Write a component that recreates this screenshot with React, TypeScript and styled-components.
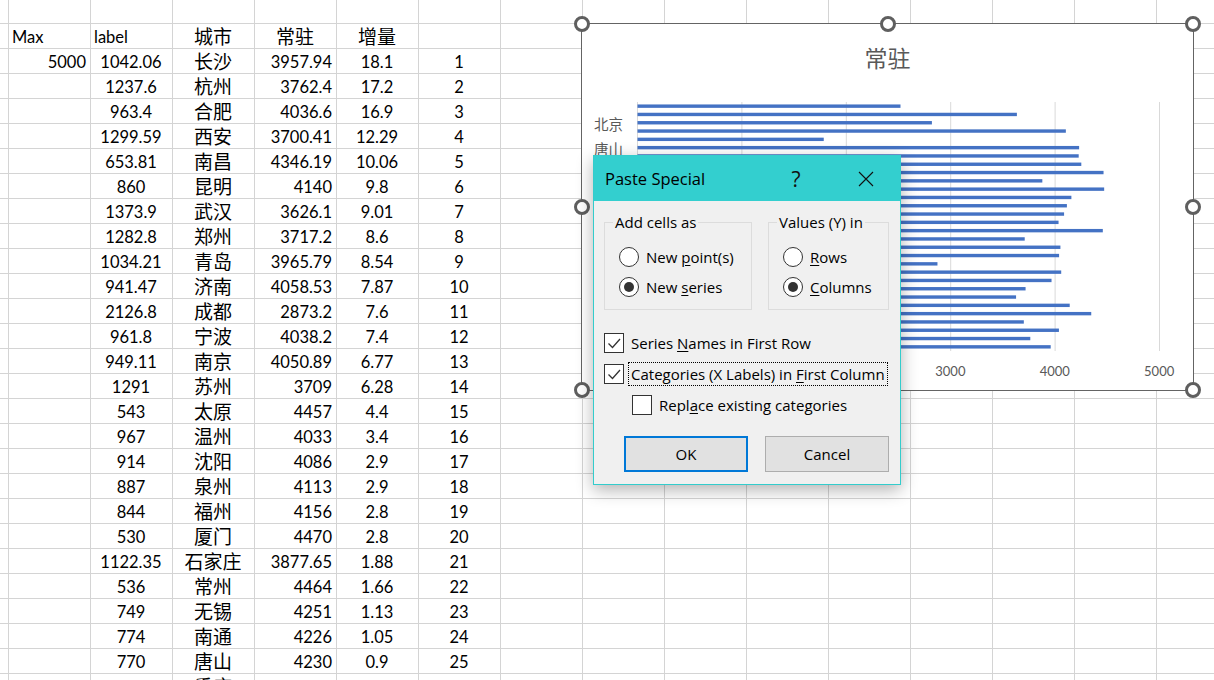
import React from 'react';
import styled, { createGlobalStyle } from 'styled-components';

type Align = 'left' | 'center' | 'right';

interface CityRow {
  label: number;
  city: string;
  resident: number;
  growth: number;
}

// label + resident = 5000 (the Max column)
const rows: CityRow[] = [
  { label: 1042.06, city: '长沙', resident: 3957.94, growth: 18.1 },
  { label: 1237.6, city: '杭州', resident: 3762.4, growth: 17.2 },
  { label: 963.4, city: '合肥', resident: 4036.6, growth: 16.9 },
  { label: 1299.59, city: '西安', resident: 3700.41, growth: 12.29 },
  { label: 653.81, city: '南昌', resident: 4346.19, growth: 10.06 },
  { label: 860, city: '昆明', resident: 4140, growth: 9.8 },
  { label: 1373.9, city: '武汉', resident: 3626.1, growth: 9.01 },
  { label: 1282.8, city: '郑州', resident: 3717.2, growth: 8.6 },
  { label: 1034.21, city: '青岛', resident: 3965.79, growth: 8.54 },
  { label: 941.47, city: '济南', resident: 4058.53, growth: 7.87 },
  { label: 2126.8, city: '成都', resident: 2873.2, growth: 7.6 },
  { label: 961.8, city: '宁波', resident: 4038.2, growth: 7.4 },
  { label: 949.11, city: '南京', resident: 4050.89, growth: 6.77 },
  { label: 1291, city: '苏州', resident: 3709, growth: 6.28 },
  { label: 543, city: '太原', resident: 4457, growth: 4.4 },
  { label: 967, city: '温州', resident: 4033, growth: 3.4 },
  { label: 914, city: '沈阳', resident: 4086, growth: 2.9 },
  { label: 887, city: '泉州', resident: 4113, growth: 2.9 },
  { label: 844, city: '福州', resident: 4156, growth: 2.8 },
  { label: 530, city: '厦门', resident: 4470, growth: 2.8 },
  { label: 1122.35, city: '石家庄', resident: 3877.65, growth: 1.88 },
  { label: 536, city: '常州', resident: 4464, growth: 1.66 },
  { label: 749, city: '无锡', resident: 4251, growth: 1.13 },
  { label: 774, city: '南通', resident: 4226, growth: 1.05 },
  { label: 770, city: '唐山', resident: 4230, growth: 0.9 },
  { label: 3216, city: '重庆', resident: 1784, growth: 0.8 },
  { label: 897, city: '天津', resident: 4103, growth: 0.7 },
  { label: 2180, city: '北京', resident: 2820, growth: 0.6 },
  { label: 1366, city: '广州', resident: 3634, growth: 0.5 },
  { label: 2481, city: '深圳', resident: 2519, growth: 0.4 },
];

const VISIBLE_ROWS = 26;
const EXTRA_COLS = 9;
const PX_PER_UNIT = 104.4 / 1000;
const BAND = 8.3;

const GlobalStyle = createGlobalStyle`
  html, body {
    margin: 0;
    padding: 0;
    background: #fff;
  }
  body {
    overflow: hidden;
  }
`;

const Page = styled.div`
  position: relative;
  width: 1214px;
  height: 680px;
  overflow: hidden;
  background: #fff;
`;

const Sheet = styled.div`
  display: grid;
  grid-template-columns: 9px repeat(15, 82px);
  grid-template-rows: 24px;
  grid-auto-rows: 25px;
  font-family: Lato, 'Noto Sans CJK SC', sans-serif;
  color: #000;
`;

const Cell = styled.div<{ $align?: Align; $cjk?: boolean }>`
  box-sizing: border-box;
  border-right: 1px solid #d4d4d4;
  border-bottom: 1px solid #d4d4d4;
  display: flex;
  align-items: flex-end;
  justify-content: ${(p) =>
    p.$align === 'right' ? 'flex-end' : p.$align === 'center' ? 'center' : 'flex-start'};
  padding: 0 4px 1px 3px;
  font-size: ${(p) => (p.$cjk ? '19px' : '16.5px')};
  line-height: 20px;
  white-space: nowrap;
`;

/* chart object */
const ChartFrame = styled.div`
  position: absolute;
  left: 581px;
  top: 23px;
  width: 613px;
  height: 368px;
  box-sizing: border-box;
  border: 1px solid #646464;
  background: #fff;
  display: flex;
  flex-direction: column;
  font-family: Lato, 'Noto Sans CJK SC', sans-serif;
  color: #595959;
`;

const ChartTitle = styled.div`
  height: 78px;
  box-sizing: border-box;
  padding-top: 20px;
  text-align: center;
  font-size: 23px;
  line-height: 28px;
`;

const PlotRow = styled.div`
  display: flex;
  height: 249px;
`;

const CategoryAxis = styled.div`
  width: 55px;
  box-sizing: border-box;
  padding: 11px 14px 0 0;
  display: flex;
  flex-direction: column;
  align-items: flex-end;
  overflow: hidden;
`;

const CategoryLabel = styled.span`
  height: 24.9px;
  line-height: 24.9px;
  font-size: 14.5px;
  flex-shrink: 0;
`;

const ValueAxis = styled.div`
  display: flex;
  margin-top: 12px;
  padding-left: 3px;
`;

const Tick = styled.span`
  width: 104.4px;
  flex-shrink: 0;
  text-align: center;
  font-size: 13px;
  line-height: 16px;
`;

const Handle = styled.span<{ $x: number; $y: number }>`
  position: absolute;
  left: ${(p) => p.$x}%;
  top: ${(p) => p.$y}%;
  width: 16px;
  height: 16px;
  margin: -8px 0 0 -8px;
  box-sizing: border-box;
  border: 3px solid #5f5f5f;
  border-radius: 50%;
  background: #fff;
`;

/* paste special dialog */
const Dialog = styled.div`
  position: absolute;
  left: 593px;
  top: 155px;
  width: 308px;
  height: 330px;
  box-sizing: border-box;
  border: 1px solid #33cccc;
  background: #f0f0f0;
  box-shadow: 0 5px 16px rgba(0, 0, 0, 0.3);
  display: flex;
  flex-direction: column;
  font-family: 'Open Sans', sans-serif;
  font-size: 15px;
  color: #000;
`;

const TitleBar = styled.div`
  height: 45px;
  flex-shrink: 0;
  background: #33cfcf;
  display: flex;
  align-items: center;
  padding-left: 11px;
`;

const TitleText = styled.span`
  flex: 1;
  font-size: 16.5px;
`;

const TitleButton = styled.span<{ $gap: number }>`
  width: 46px;
  display: flex;
  justify-content: center;
  align-items: center;
  margin-right: ${(p) => p.$gap}px;
  font-size: 21px;
  color: #111;
`;

const Body = styled.div`
  flex: 1;
  display: flex;
  flex-direction: column;
  padding: 11px 11px 12px 10px;
`;

const GroupRow = styled.div`
  display: flex;
  gap: 16px;
`;

const Group = styled.fieldset<{ $width: number }>`
  margin: 0;
  width: ${(p) => p.$width}px;
  box-sizing: border-box;
  min-inline-size: 0;
  border: 1px solid #dcdcdc;
  padding: 10px 0 7px 8px;
`;

const Legend = styled.legend`
  padding: 0 2px;
  line-height: 20px;
`;

const OptionRow = styled.label`
  display: flex;
  align-items: center;
  height: 30px;
  margin-left: 6px;
  gap: 7px;
  line-height: 20px;
`;

const RadioCircle = styled.span<{ $checked?: boolean }>`
  width: 20px;
  height: 20px;
  box-sizing: border-box;
  border: 1px solid #333;
  border-radius: 50%;
  background: #fff;
  display: flex;
  align-items: center;
  justify-content: center;

  &::after {
    content: '';
    width: 10px;
    height: 10px;
    border-radius: 50%;
    background: ${(p) => (p.$checked ? '#333' : 'transparent')};
  }
`;

const CheckList = styled.div`
  margin-top: 17px;
  display: flex;
  flex-direction: column;
`;

const CheckRow = styled.label<{ $indent?: number }>`
  display: flex;
  align-items: center;
  height: 31px;
  margin-left: ${(p) => p.$indent ?? 0}px;
`;

const CheckBox = styled.span`
  width: 20px;
  height: 20px;
  box-sizing: border-box;
  border: 1px solid #333;
  background: #fff;
  display: flex;
`;

const CheckText = styled.span<{ $focused?: boolean }>`
  margin-left: 4px;
  padding: 0 2px;
  line-height: 22px;
  border: 1px ${(p) => (p.$focused ? 'dotted #000' : 'solid transparent')};
  white-space: nowrap;
`;

const Key = styled.u`
  text-underline-offset: 2px;
`;

const ButtonRow = styled.div`
  margin-top: 16px;
  display: flex;
  justify-content: flex-end;
  gap: 17px;
`;

const DialogButton = styled.button<{ $primary?: boolean }>`
  width: 124px;
  height: 36px;
  box-sizing: border-box;
  background: #e1e1e1;
  border: ${(p) => (p.$primary ? '2px solid #0078d7' : '1px solid #adadad')};
  font: inherit;
  color: #000;
  padding: 0;
`;

const Check = () => (
  <svg width="18" height="18" viewBox="0 0 18 18">
    <polyline points="3.5,9.5 7.5,13.5 15,5" fill="none" stroke="#333" strokeWidth="1.3" />
  </svg>
);

const CloseIcon = () => (
  <svg width="16" height="16" viewBox="0 0 16 16">
    <path d="M1 1 L15 15 M15 1 L1 15" stroke="#111" strokeWidth="1.1" />
  </svg>
);

const emptyCols = (key: string) =>
  Array.from({ length: EXTRA_COLS }, (_, i) => <Cell key={`${key}-x${i}`} />);

const SheetGrid = () => (
  <Sheet>
    {Array.from({ length: 16 }, (_, i) => (
      <Cell key={`top-${i}`} />
    ))}
    <Cell />
    <Cell>Max</Cell>
    <Cell>label</Cell>
    <Cell $align="center" $cjk>城市</Cell>
    <Cell $align="center" $cjk>常驻</Cell>
    <Cell $align="center" $cjk>增量</Cell>
    <Cell />
    {emptyCols('head')}
    {rows.slice(0, VISIBLE_ROWS).map((r, i) => (
      <React.Fragment key={r.city}>
        <Cell />
        <Cell $align="right">{i === 0 ? '5000' : ''}</Cell>
        <Cell $align="center">{r.label}</Cell>
        <Cell $align="center" $cjk>{r.city}</Cell>
        <Cell $align="right">{r.resident}</Cell>
        <Cell $align="center">{r.growth}</Cell>
        <Cell $align="center">{i + 1}</Cell>
        {emptyCols(r.city)}
      </React.Fragment>
    ))}
  </Sheet>
);

const handles: [number, number][] = [
  [0, 0], [50, 0], [100, 0], [0, 50], [100, 50], [0, 100], [50, 100], [100, 100],
];

const Chart = () => {
  // Excel draws the first category at the bottom
  const bars = [...rows].reverse();
  const labels = bars.filter((_, i) => i % 3 === 2);
  return (
    <ChartFrame>
      <ChartTitle>常驻</ChartTitle>
      <PlotRow>
        <CategoryAxis>
          {labels.map((r) => (
            <CategoryLabel key={r.city}>{r.city}</CategoryLabel>
          ))}
        </CategoryAxis>
        <svg width="524" height="249">
          {[0, 1, 2, 3, 4, 5].map((k) => (
            <line
              key={k}
              x1={0.5 + k * 104.4}
              x2={0.5 + k * 104.4}
              y1={0}
              y2={249}
              stroke="#d9d9d9"
              strokeWidth="1"
            />
          ))}
          {bars.map((r, i) => (
            <rect
              key={r.city}
              x={0.5}
              y={i * BAND + BAND / 2 - 1.7}
              width={r.resident * PX_PER_UNIT}
              height={3.4}
              fill="#4472c4"
            />
          ))}
        </svg>
      </PlotRow>
      <ValueAxis>
        {[0, 1000, 2000, 3000, 4000, 5000].map((v) => (
          <Tick key={v}>{v}</Tick>
        ))}
      </ValueAxis>
      {handles.map(([x, y]) => (
        <Handle key={`${x}-${y}`} $x={x} $y={y} />
      ))}
    </ChartFrame>
  );
};

const PasteSpecial = () => (
  <Dialog>
    <TitleBar>
      <TitleText>Paste Special</TitleText>
      <TitleButton $gap={24}>?</TitleButton>
      <TitleButton $gap={11}>
        <CloseIcon />
      </TitleButton>
    </TitleBar>
    <Body>
      <GroupRow>
        <Group $width={148}>
          <Legend>Add cells as</Legend>
          <OptionRow>
            <RadioCircle />
            <span>
              New <Key>p</Key>oint(s)
            </span>
          </OptionRow>
          <OptionRow>
            <RadioCircle $checked />
            <span>
              New <Key>s</Key>eries
            </span>
          </OptionRow>
        </Group>
        <Group $width={121}>
          <Legend>Values (Y) in</Legend>
          <OptionRow>
            <RadioCircle />
            <span>
              <Key>R</Key>ows
            </span>
          </OptionRow>
          <OptionRow>
            <RadioCircle $checked />
            <span>
              <Key>C</Key>olumns
            </span>
          </OptionRow>
        </Group>
      </GroupRow>
      <CheckList>
        <CheckRow>
          <CheckBox>
            <Check />
          </CheckBox>
          <CheckText>
            Series <Key>N</Key>ames in First Row
          </CheckText>
        </CheckRow>
        <CheckRow>
          <CheckBox>
            <Check />
          </CheckBox>
          <CheckText $focused>
            Categories (X Labels) in <Key>F</Key>irst Column
          </CheckText>
        </CheckRow>
        <CheckRow $indent={28}>
          <CheckBox />
          <CheckText>
            Repl<Key>a</Key>ce existing categories
          </CheckText>
        </CheckRow>
      </CheckList>
      <ButtonRow>
        <DialogButton $primary>OK</DialogButton>
        <DialogButton>Cancel</DialogButton>
      </ButtonRow>
    </Body>
  </Dialog>
);

export default function App() {
  return (
    <Page>
      <GlobalStyle />
      <SheetGrid />
      <Chart />
      <PasteSpecial />
    </Page>
  );
}
